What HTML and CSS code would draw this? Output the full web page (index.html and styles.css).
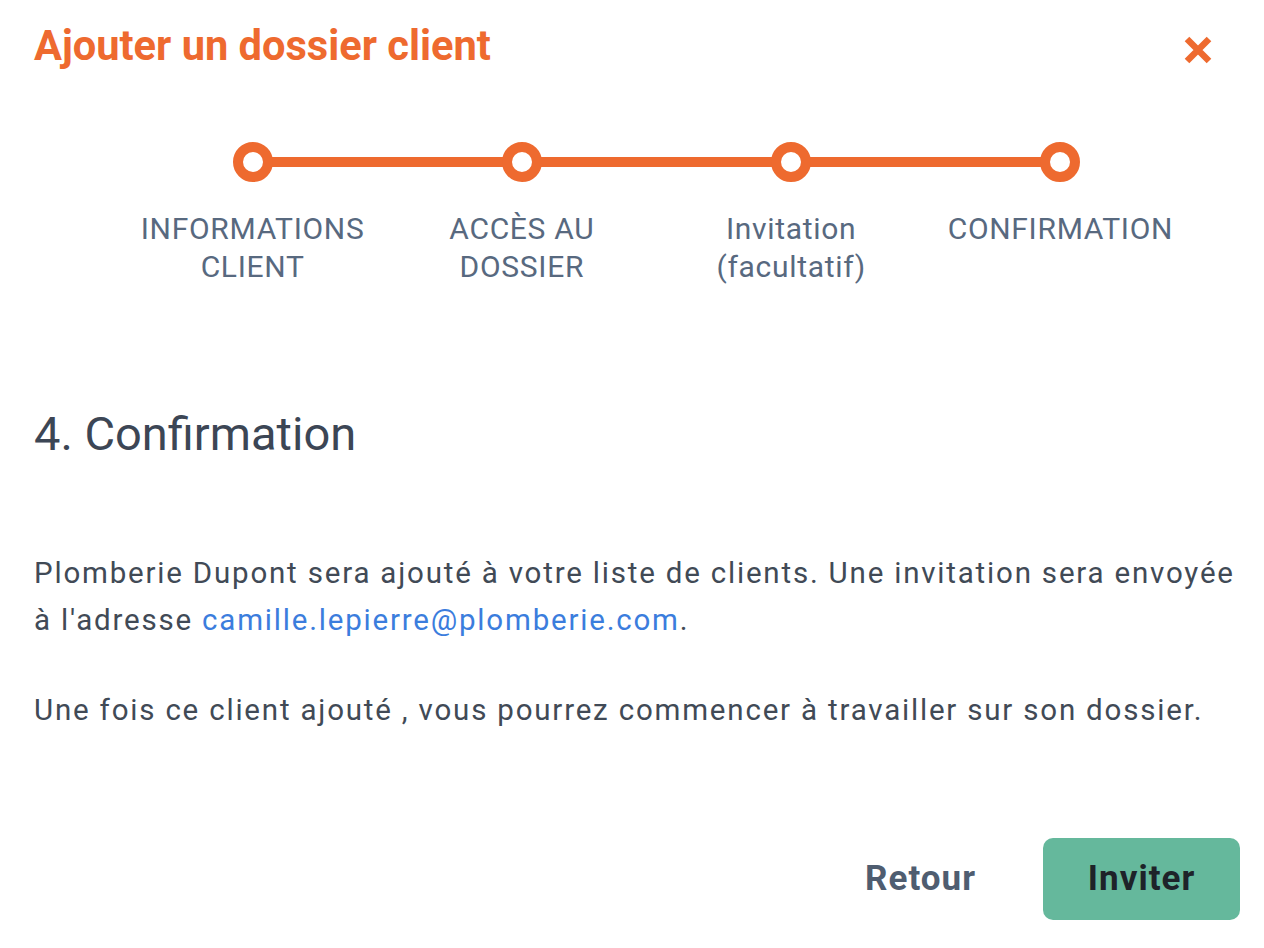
FILE: index.html
```html
<!DOCTYPE html>
<html lang="fr">
<head>
<meta charset="utf-8">
<title>Ajouter un dossier client</title>
<link rel="stylesheet" href="styles.css">
</head>
<body>
<div class="dialog">
  <header class="dialog-header">
    <h1 class="dialog-title">Ajouter un dossier client</h1>
    <button class="close-btn" aria-label="Fermer">
      <svg width="30" height="30" viewBox="0 0 30 30"><path d="M4 4 L26 26 M26 4 L4 26" stroke="#ee6a2f" stroke-width="6.5" stroke-linecap="butt" fill="none"/></svg>
    </button>
  </header>

  <ol class="stepper">
    <li class="step"><span class="step-dot"></span><span class="step-label">INFORMATIONS CLIENT</span></li>
    <li class="step"><span class="step-dot"></span><span class="step-label">ACCÈS AU DOSSIER</span></li>
    <li class="step"><span class="step-dot"></span><span class="step-label">Invitation (facultatif)</span></li>
    <li class="step"><span class="step-dot"></span><span class="step-label">CONFIRMATION</span></li>
  </ol>

  <h2 class="section-title">4. Confirmation</h2>

  <p class="text first">Plomberie Dupont sera ajouté à votre liste de clients. Une invitation sera envoyée à l'adresse <a class="link" href="#">camille.lepierre@plomberie.com</a>.</p>
  <p class="text second">Une fois ce client ajouté , vous pourrez commencer à travailler sur son dossier.</p>

  <footer class="actions">
    <button class="btn-back">Retour</button>
    <button class="btn-primary">Inviter</button>
  </footer>
</div>
</body>
</html>
```

FILE: styles.css
```css
* { box-sizing: border-box; }

html, body {
  margin: 0;
  padding: 0;
  background: #ffffff;
}

body {
  font-family: Roboto, "Liberation Sans", Arial, sans-serif;
  color: #414a56;
}

.dialog {
  padding: 0 24px 0 34px;
}

.dialog-header {
  display: flex;
  align-items: center;
  justify-content: space-between;
  margin-top: 21px;
  height: 50px;
}

.dialog-title {
  margin: 0;
  font-size: 41.6px;
  line-height: 50px;
  font-weight: 700;
  color: #ee6a2f;
}

.close-btn {
  border: 0;
  background: none;
  padding: 0;
  margin: 8px 27px 0 0;
  width: 30px;
  height: 30px;
  display: flex;
  cursor: pointer;
}

.stepper {
  list-style: none;
  margin: 71px 0 0 84px;
  padding: 0;
  width: 1077px;
  display: grid;
  grid-template-columns: repeat(4, 1fr);
}

.step {
  position: relative;
  display: flex;
  flex-direction: column;
  align-items: center;
}

.step + .step::before {
  content: "";
  position: absolute;
  top: 15px;
  left: -50%;
  right: 50%;
  height: 10px;
  background: #ee6a2f;
  z-index: 0;
}

.step-dot {
  position: relative;
  z-index: 1;
  width: 40px;
  height: 40px;
  border-radius: 50%;
  border: 10px solid #ee6a2f;
  background: #ffffff;
}

.step-label {
  margin-top: 27.5px;
  width: 250px;
  text-align: center;
  font-size: 30px;
  line-height: 38.5px;
  letter-spacing: 0.7px;
  color: #58697f;
}

.section-title {
  margin: 119.5px 0 0;
  font-size: 47px;
  line-height: 56px;
  font-weight: 400;
  color: #3c4655;
}

.text {
  margin: 0;
  font-size: 29.5px;
  line-height: 47px;
  letter-spacing: 1.8px;
  color: #414a56;
}

.text.first { margin-top: 87.6px; }
.text.second { margin-top: 43px; }

.link {
  color: #3b7ddd;
  text-decoration: none;
}

.actions {
  display: flex;
  justify-content: flex-end;
  align-items: center;
  gap: 45px;
  margin-top: 104px;
}

.btn-back {
  border: 0;
  background: none;
  font-family: inherit;
  font-size: 35px;
  font-weight: 700;
  letter-spacing: 1px;
  color: #4f5d70;
  padding: 0 22px;
  cursor: pointer;
}

.btn-primary {
  border: 0;
  border-radius: 10px;
  background: #65b89c;
  width: 197px;
  height: 82px;
  font-family: inherit;
  font-size: 35px;
  font-weight: 700;
  letter-spacing: 1px;
  color: #1e2329;
  cursor: pointer;
}
```
